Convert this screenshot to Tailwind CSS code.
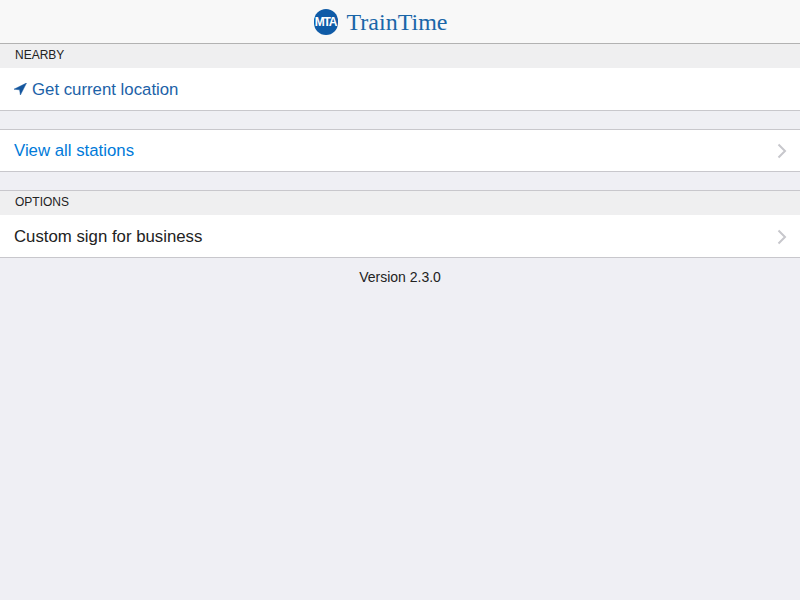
<!DOCTYPE html>
<html lang="en">
<head>
  <meta charset="UTF-8" />
  <title>TrainTime</title>
  <script src="https://cdn.jsdelivr.net/npm/@tailwindcss/browser@4"></script>
</head>
<body class="bg-[#efeff4] min-h-screen font-['Liberation_Sans',Arial,sans-serif] text-[#222]">
  <!-- header -->
  <header class="h-[44px] bg-[#f8f8f8] border-b border-[#b2b2b2] flex items-center justify-center gap-[9px] pr-[39px]">
    <div class="w-[24px] h-[26px] rounded-full bg-[#0f5ba7] flex items-center justify-center overflow-hidden">
      <span class="text-white font-bold text-[12px] leading-none tracking-[-1.2px]">MTA</span>
    </div>
    <span class="font-['Liberation_Serif',serif] text-[#1a66a8] text-[24px] leading-none">TrainTime</span>
  </header>

  <!-- nearby -->
  <div class="h-[24px] bg-[#efeff0] pl-[15px] pb-[2px] flex items-center text-[12px]">NEARBY</div>
  <a class="h-[43px] bg-white border-b border-[#c8c7cc] pl-[14px] pt-[2px] flex items-center text-[16.8px] text-[#1c62a8]">
    <svg class="w-[13px] h-[12px] mr-[5px] mb-[2px]" viewBox="0 0 13 12"><path d="M12.5 0 L0 6.2 L5.6 6.8 L6.4 12 Z" fill="#14569e" stroke="#14569e" stroke-width="0.5" stroke-linejoin="round"/></svg>
    Get current location
  </a>

  <!-- stations -->
  <a class="mt-[18px] h-[43px] bg-white border-y border-[#c8c7cc] pl-[14px] pr-[13px] flex items-center justify-between text-[16.8px] text-[#007ad9]">
    View all stations
    <svg class="w-[10px] h-[16px]" viewBox="0 0 10 16" fill="none"><path d="M1.5 1.5 L8 8 L1.5 14.5" stroke="#c7c7cc" stroke-width="2"/></svg>
  </a>

  <!-- options -->
  <div class="mt-[18px] h-[25px] bg-[#efeff0] border-t border-[#c8c7cc] pl-[15px] pb-[2px] flex items-center text-[12px]">OPTIONS</div>
  <a class="h-[43px] bg-white border-b border-[#c8c7cc] pl-[14px] pr-[13px] pt-[2px] flex items-center justify-between text-[16.8px]">
    Custom sign for business
    <svg class="w-[10px] h-[16px]" viewBox="0 0 10 16" fill="none"><path d="M1.5 1.5 L8 8 L1.5 14.5" stroke="#c7c7cc" stroke-width="2"/></svg>
  </a>

  <p class="mt-[11px] text-center text-[14px] leading-[16px]">Version 2.3.0</p>
</body>
</html>
